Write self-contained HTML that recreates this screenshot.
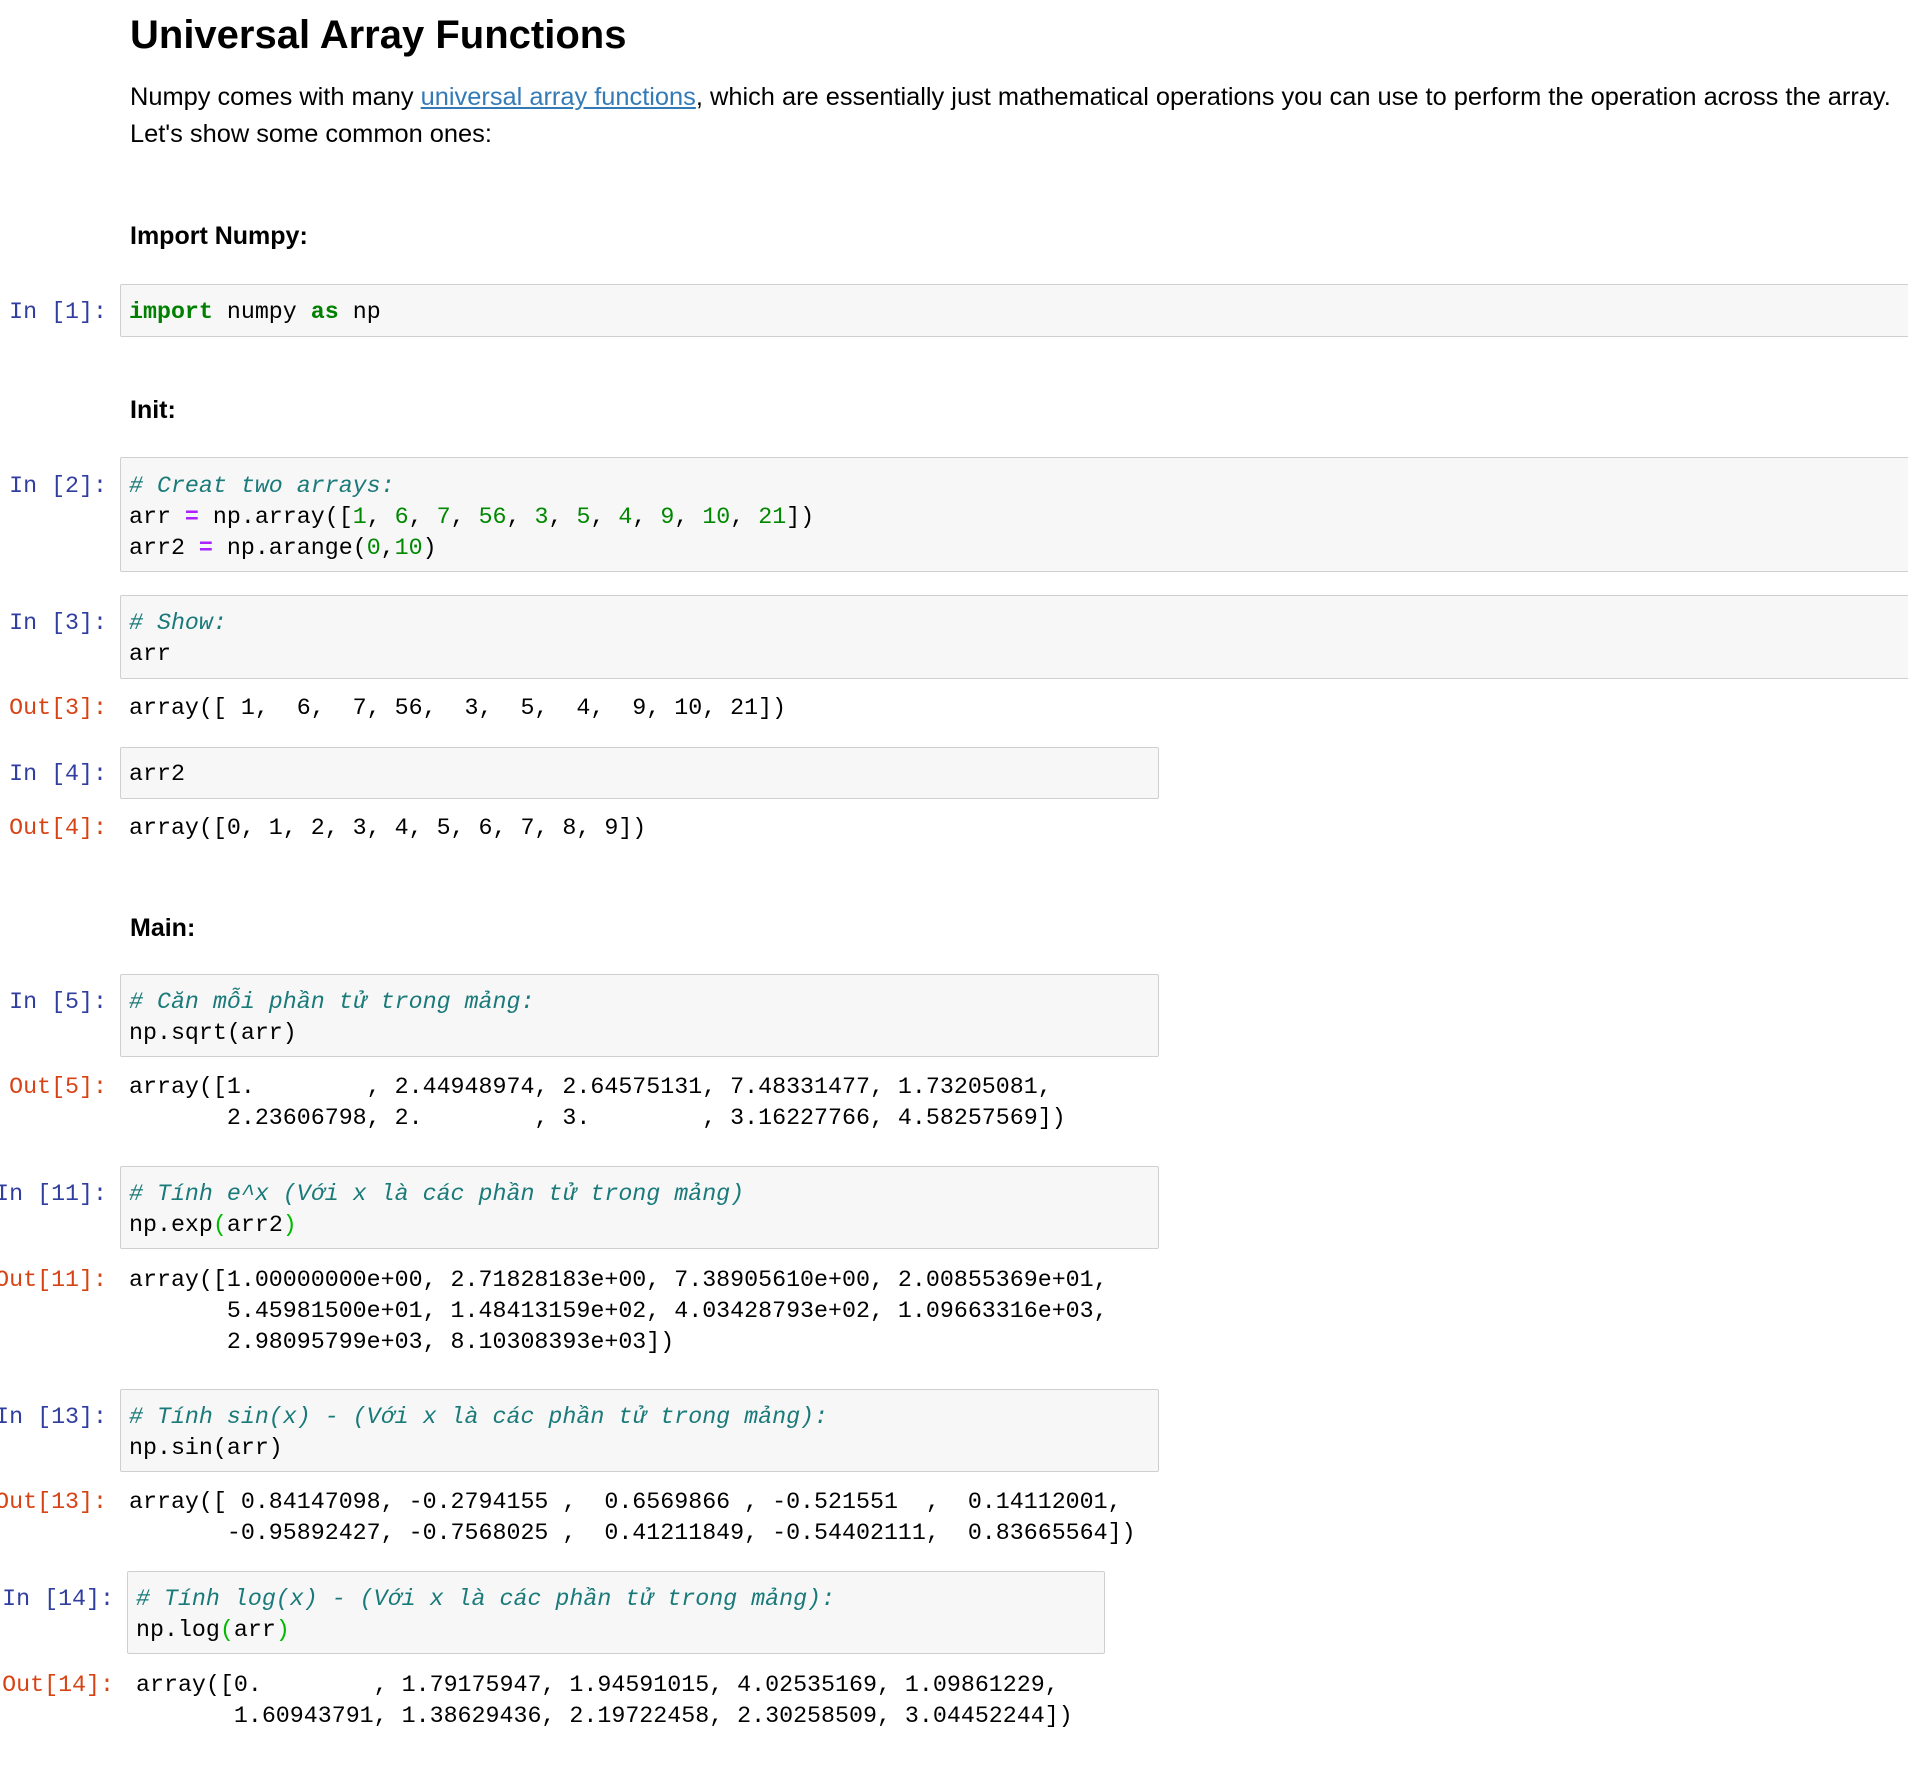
<!DOCTYPE html>
<html><head><meta charset="utf-8"><style>
body{margin:0;width:1908px;height:1772px;background:#fff;position:relative;overflow:hidden;font-family:"Liberation Sans",Arial,sans-serif;color:#000}
.a{position:absolute;white-space:pre}
.h1{font-weight:bold;font-size:40px;line-height:46px}
.p{font-size:25.4px;line-height:37px}
.h4{font-weight:bold;font-size:25px;line-height:30px}
.box{position:absolute;background:#f7f7f7;border:1px solid #cfcfcf;border-radius:2px;box-sizing:border-box}
.m{font-family:"Liberation Mono","DejaVu Sans Mono",monospace;font-size:23.3px;line-height:31px;white-space:pre;position:absolute;margin-top:2px}
.pi{color:#303F9F;text-align:right}
.po{color:#D84315;text-align:right}
.c{color:#1a7a7a;font-style:italic}
.k{color:#008000;font-weight:bold}
.n{color:#008800}
.o{color:#AA22FF;font-weight:bold}
.g{color:#00bb00}
a{color:#337ab7;text-decoration:underline}
</style></head><body>
<div class="a h1" style="left:130px;top:12px">Universal Array Functions</div>
<div class="a p" style="left:130px;top:79px">Numpy comes with many <a>universal array functions</a>, which are essentially just mathematical operations you can use to perform the operation across the array.
Let's show some common ones:</div>
<div class="a h4" style="left:130px;top:221px">Import Numpy:</div>
<div class="a h4" style="left:130px;top:395px">Init:</div>
<div class="a h4" style="left:130px;top:913px">Main:</div>

<div class="box" style="left:120px;top:284px;width:1800px;height:53px"></div>
<div class="m pi" style="left:0;width:107px;top:295px">In [1]:</div>
<div class="m" style="left:129px;top:295px"><span class="k">import</span> numpy <span class="k">as</span> np</div>

<div class="box" style="left:120px;top:457px;width:1800px;height:115px"></div>
<div class="m pi" style="left:0;width:107px;top:469px">In [2]:</div>
<div class="m" style="left:129px;top:469px"><span class="c"># Creat two arrays:</span>
arr <span class="o">=</span> np.array([<span class="n">1</span>, <span class="n">6</span>, <span class="n">7</span>, <span class="n">56</span>, <span class="n">3</span>, <span class="n">5</span>, <span class="n">4</span>, <span class="n">9</span>, <span class="n">10</span>, <span class="n">21</span>])
arr2 <span class="o">=</span> np.arange(<span class="n">0</span>,<span class="n">10</span>)</div>

<div class="box" style="left:120px;top:595px;width:1800px;height:84px"></div>
<div class="m pi" style="left:0;width:107px;top:606px">In [3]:</div>
<div class="m" style="left:129px;top:606px"><span class="c"># Show:</span>
arr</div>
<div class="m po" style="left:0;width:107px;top:691px">Out[3]:</div>
<div class="m" style="left:129px;top:691px">array([ 1,  6,  7, 56,  3,  5,  4,  9, 10, 21])</div>

<div class="box" style="left:120px;top:747px;width:1039px;height:52px"></div>
<div class="m pi" style="left:0;width:107px;top:757px">In [4]:</div>
<div class="m" style="left:129px;top:757px">arr2</div>
<div class="m po" style="left:0;width:107px;top:811px">Out[4]:</div>
<div class="m" style="left:129px;top:811px">array([0, 1, 2, 3, 4, 5, 6, 7, 8, 9])</div>

<div class="box" style="left:120px;top:974px;width:1039px;height:83px"></div>
<div class="m pi" style="left:0;width:107px;top:985px">In [5]:</div>
<div class="m" style="left:129px;top:985px"><span class="c"># Căn mỗi phần tử trong mảng:</span>
np.sqrt(arr)</div>
<div class="m po" style="left:0;width:107px;top:1070px">Out[5]:</div>
<div class="m" style="left:129px;top:1070px">array([1.        , 2.44948974, 2.64575131, 7.48331477, 1.73205081,
       2.23606798, 2.        , 3.        , 3.16227766, 4.58257569])</div>

<div class="box" style="left:120px;top:1166px;width:1039px;height:83px"></div>
<div class="m pi" style="left:-20px;width:127px;top:1177px">In [11]:</div>
<div class="m" style="left:129px;top:1177px"><span class="c"># Tính e^x (Với x là các phần tử trong mảng)</span>
np.exp<span class="g">(</span>arr2<span class="g">)</span></div>
<div class="m po" style="left:-20px;width:127px;top:1263px">Out[11]:</div>
<div class="m" style="left:129px;top:1263px">array([1.00000000e+00, 2.71828183e+00, 7.38905610e+00, 2.00855369e+01,
       5.45981500e+01, 1.48413159e+02, 4.03428793e+02, 1.09663316e+03,
       2.98095799e+03, 8.10308393e+03])</div>

<div class="box" style="left:120px;top:1389px;width:1039px;height:83px"></div>
<div class="m pi" style="left:-20px;width:127px;top:1400px">In [13]:</div>
<div class="m" style="left:129px;top:1400px"><span class="c"># Tính sin(x) - (Với x là các phần tử trong mảng):</span>
np.sin(arr)</div>
<div class="m po" style="left:-20px;width:127px;top:1485px">Out[13]:</div>
<div class="m" style="left:129px;top:1485px">array([ 0.84147098, -0.2794155 ,  0.6569866 , -0.521551  ,  0.14112001,
       -0.95892427, -0.7568025 ,  0.41211849, -0.54402111,  0.83665564])</div>

<div class="box" style="left:127px;top:1571px;width:978px;height:83px"></div>
<div class="m pi" style="left:0;width:114px;top:1582px">In [14]:</div>
<div class="m" style="left:136px;top:1582px"><span class="c"># Tính log(x) - (Với x là các phần tử trong mảng):</span>
np.log<span class="g">(</span>arr<span class="g">)</span></div>
<div class="m po" style="left:0;width:114px;top:1668px">Out[14]:</div>
<div class="m" style="left:136px;top:1668px">array([0.        , 1.79175947, 1.94591015, 4.02535169, 1.09861229,
       1.60943791, 1.38629436, 2.19722458, 2.30258509, 3.04452244])</div>
</body></html>
